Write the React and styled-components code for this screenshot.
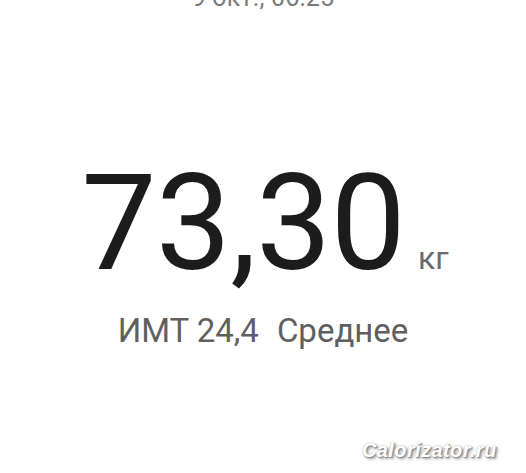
import React from "react";
import styled, { createGlobalStyle } from "styled-components";

const Global = createGlobalStyle`
  html, body { margin: 0; padding: 0; background: #ffffff; }
  body { font-family: Roboto, "Noto Sans", sans-serif; }
`;

const Screen = styled.div`
  position: relative;
  width: 526px;
  height: 473px;
  overflow: hidden;
  background: #ffffff;
  display: flex;
  flex-direction: column;
  align-items: center;
`;

const DateLine = styled.div`
  margin-top: -15px;
  font-size: 25px;
  line-height: 1;
  color: #7a7a7a;
  letter-spacing: 0.2px;
`;

const WeightRow = styled.div`
  margin-top: 147px;
  display: flex;
  align-items: baseline;
  gap: 13px;
  padding-left: 4px;
`;

const Value = styled.span`
  font-size: 134px;
  line-height: 1;
  color: #1c1c1c;
  letter-spacing: -0.8px;
`;

const Unit = styled.span`
  font-size: 32px;
  line-height: 1;
  color: #6a6a6a;
`;

const BmiRow = styled.div`
  margin-top: 22px;
  display: flex;
  align-items: baseline;
  gap: 18px;
  font-size: 33px;
  line-height: 36px;
  color: #5f5f5f;
`;

const Watermark = styled.div`
  position: absolute;
  left: 362px;
  top: 439px;
  font-family: "Liberation Sans", Arial, sans-serif;
  font-weight: 700;
  font-style: italic;
  font-size: 20px;
  color: #ffffff;
  letter-spacing: 0.4px;
  text-shadow: 1px 1px 1px #8a8a8a, 2px 2px 3px #9a9a9a, 0 0 2px #b0b0b0;
`;

export default function App() {
  return (
    <>
      <Global />
      <Screen>
        <DateLine>9 окт., 06:25</DateLine>
        <WeightRow>
          <Value>73,30</Value>
          <Unit>кг</Unit>
        </WeightRow>
        <BmiRow>
          <span>ИМТ 24,4</span>
          <span>Среднее</span>
        </BmiRow>
        <Watermark>Calorizator.ru</Watermark>
      </Screen>
    </>
  );
}
